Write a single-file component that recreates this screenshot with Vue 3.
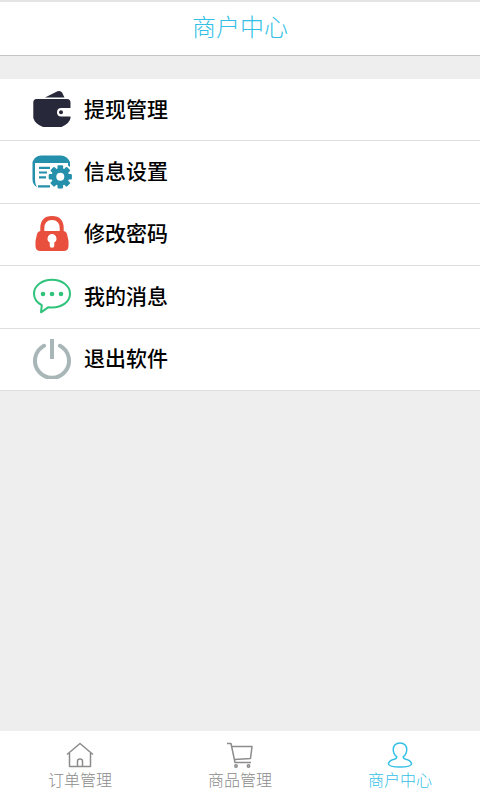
<script setup>
const items = [
  { icon: 'wallet', label: '提现管理' },
  { icon: 'settings', label: '信息设置' },
  { icon: 'lock', label: '修改密码' },
  { icon: 'message', label: '我的消息' },
  { icon: 'power', label: '退出软件' },
]
const tabs = [
  { icon: 'home', label: '订单管理', active: false },
  { icon: 'cart', label: '商品管理', active: false },
  { icon: 'user', label: '商户中心', active: true },
]
const teeth = [0, 45, 90, 135, 180, 225, 270, 315]
</script>

<template>
  <div class="page">
    <header class="header">
      <h1>商户中心</h1>
    </header>

    <main class="main">
      <nav class="list">
        <a v-for="item in items" :key="item.icon" class="row" href="#">
          <svg v-if="item.icon === 'wallet'" class="icon" viewBox="0 0 40 40" aria-hidden="true">
            <path fill="#28283b" d="M13 7.600 25.500 1.300Q28.500 .2 30 2.500L32.500 7.600Z" />
            <path fill="#28283b" d="M4.500 9H35Q38.500 9 38.500 12.500V18H29.500Q25 18 25 22.300T29.500 26.500H38.500V28Q38 33 29.500 37H11Q3 34 1.300 28V12.500Q1.300 9 4.500 9Z" />
            <circle cx="29" cy="22.300" r="2" fill="#28283b" />
          </svg>

          <svg v-else-if="item.icon === 'settings'" class="icon" viewBox="0 0 40 40" aria-hidden="true">
            <path fill="#2590ab" d="M.5 10Q3 3.500 9 3.500H29Q35 3.500 38 10V11H3V28Q3 32.500 5 35Q.5 33 .5 27Z" />
            <path fill="#2590ab" d="M36 10H38V15L36 13.500Z" />
            <path d="M7 15.800H18M7 20.500H15M7 25.300H14M6 34.300H18" stroke="#2590ab" stroke-width="2.200" />
            <circle cx="28.300" cy="24.800" r="11" fill="#fff" />
            <g fill="#2590ab">
              <rect v-for="a in teeth" :key="a" x="25.500" y="13.200" width="5.600" height="6" rx="1" :transform="`rotate(${a} 28.300 24.800)`" />
              <circle cx="28.300" cy="24.800" r="8.900" />
            </g>
            <circle cx="28.300" cy="24.800" r="4" fill="#fff" />
          </svg>

          <svg v-else-if="item.icon === 'lock'" class="icon" viewBox="0 0 40 40" aria-hidden="true">
            <path d="M10.300 18V14.500Q10.300 4 20 4T29.700 14.500V18" fill="none" stroke="#e84f3d" stroke-width="4" />
            <path d="M9 17H31Q34 17 35 20L36.500 27V32Q36.500 37 31.500 37H8.500Q3.500 37 3.500 32V27L5 20Q6 17 9 17Z" fill="#e84f3d" />
            <path d="M20 20a4.600 4.600 0 0 0-2.300 8.500V31.500a2.300 2.300 0 0 0 4.600 0V28.500A4.600 4.600 0 0 0 20 20Z" fill="#fff" />
          </svg>

          <svg v-else-if="item.icon === 'message'" class="icon" viewBox="0 0 40 40" aria-hidden="true">
            <path d="M20 2.800C30 2.800 38 8.800 38 16.800S30 30.500 20 30.500Q18 30.500 16.500 30.200L9 35.300 9.800 28.200Q2 24 2 16.800C2 8.800 10 2.800 20 2.800Z" fill="none" stroke="#2fc37b" stroke-width="2" stroke-linejoin="round" />
            <g fill="#2fc37b">
              <circle cx="11" cy="17" r="2.300" />
              <circle cx="20" cy="17" r="2.300" />
              <circle cx="29" cy="17" r="2.300" />
            </g>
          </svg>

          <svg v-else class="icon" viewBox="0 0 40 40" aria-hidden="true">
            <g fill="none" stroke="#a9b6b8" stroke-width="4">
              <path d="M12 6.800A17 17 0 1 0 28 6.800" stroke-linecap="round" />
              <path d="M20 0V20" />
            </g>
          </svg>

          <span class="label">{{ item.label }}</span>
        </a>
      </nav>
    </main>

    <nav class="tabs">
      <a v-for="tab in tabs" :key="tab.icon" class="tab" :class="{ active: tab.active }" href="#">
        <svg v-if="tab.icon === 'home'" class="tab-icon" viewBox="0 0 28 28" aria-hidden="true">
          <path d="M1 13.500 14 2.500 27 13.500M3.500 12V25.500H24.500V12M11.500 25V20Q11.500 18 14 18T16.500 20V25" />
        </svg>
        <svg v-else-if="tab.icon === 'cart'" class="tab-icon" viewBox="0 0 28 28" aria-hidden="true">
          <path d="M1 2.500H5L9 21.500H25M6 5.500H26L24.500 17.500 8.500 18.500" />
          <circle cx="10" cy="25" r="1.200" />
          <circle cx="22.500" cy="25" r="1.200" />
        </svg>
        <svg v-else class="tab-icon" viewBox="0 0 28 28" aria-hidden="true">
          <path d="M14 2C9.500 2 7 5 7.300 9Q7.500 13.500 10.700 15.700Q11 17.300 9 18C4.500 19.200 2.500 20.500 2.500 23Q3 26 14 26T25.500 23C25.500 20.500 23.500 19.200 19 18Q17 17.300 17.300 15.700Q20.500 13.500 20.700 9C21 5 18.500 2 14 2Z" />
        </svg>
        <span>{{ tab.label }}</span>
      </a>
    </nav>
  </div>
</template>

<style>
body {
  margin: 0;
}
</style>

<style scoped>
.page {
  display: flex;
  flex-direction: column;
  min-height: 100vh;
  background: #eee;
  font-family: "Noto Sans CJK SC", sans-serif;
}
.header {
  box-sizing: border-box;
  height: 56px;
  padding-bottom: 6px;
  border-top: 2px solid #e4e4e4;
  border-bottom: 1px solid #c4c4c4;
  background: #fff;
  display: flex;
  align-items: center;
  justify-content: center;
}
h1 {
  margin: 0;
  font-size: 24px;
  line-height: 32px;
  font-weight: 300;
  color: #35bfe6;
}
.main {
  flex: 1;
  padding-top: 23px;
}
.list {
  display: grid;
  grid-auto-rows: 1fr;
  min-height: 312px;
  background: #fff;
}
.row {
  display: flex;
  align-items: center;
  gap: 12px;
  padding: 0 32px;
  border-bottom: 1px solid #dedede;
  color: #000;
  text-decoration: none;
}
.icon {
  width: 40px;
  height: 40px;
  flex: none;
}
.label {
  padding-bottom: 4px;
  font-size: 21px;
  line-height: 32px;
  font-weight: 500;
}
.tabs {
  display: flex;
  background: #fff;
}
.tab {
  flex: 1;
  display: flex;
  flex-direction: column;
  align-items: center;
  padding: 10px 0 11px;
  color: #8c8c8c;
  text-decoration: none;
  font-size: 16px;
  line-height: 20px;
  font-weight: 300;
}
.tab.active {
  color: #35bfe6;
}
.tab-icon {
  width: 28px;
  height: 28px;
  fill: none;
  stroke: currentColor;
  stroke-width: 1.5;
  stroke-linejoin: round;
}
</style>
